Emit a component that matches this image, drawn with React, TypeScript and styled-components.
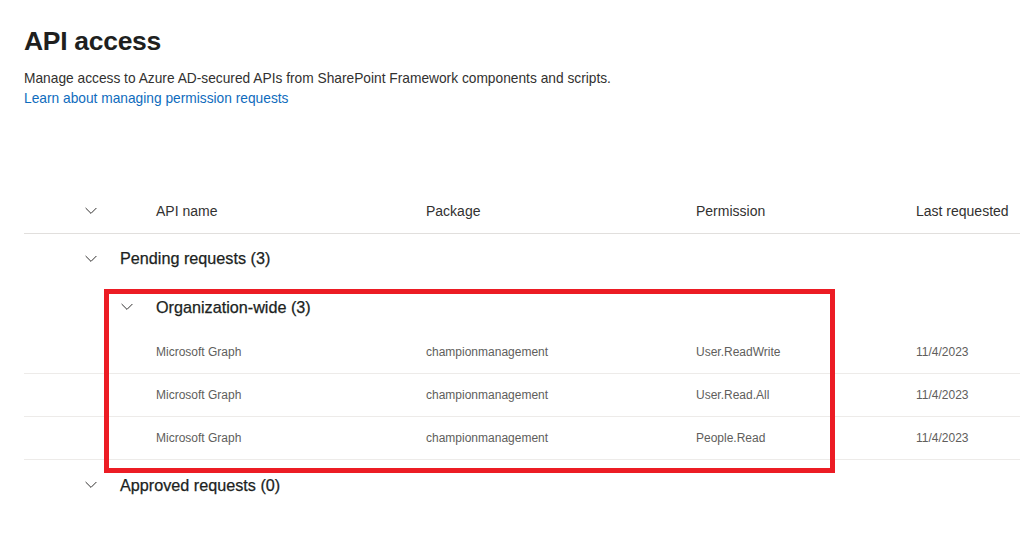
import React from "react";
import styled, { createGlobalStyle } from "styled-components";

const GlobalStyle = createGlobalStyle`
  html, body {
    margin: 0;
    padding: 0;
    background: #ffffff;
    overflow: hidden;
  }
  body {
    font-family: "Liberation Sans", Arial, sans-serif;
    color: #323130;
  }
`;

type Request = {
  api: string;
  pkg: string;
  permission: string;
  date: string;
};

const requests: Request[] = [
  { api: "Microsoft Graph", pkg: "championmanagement", permission: "User.ReadWrite", date: "11/4/2023" },
  { api: "Microsoft Graph", pkg: "championmanagement", permission: "User.Read.All", date: "11/4/2023" },
  { api: "Microsoft Graph", pkg: "championmanagement", permission: "People.Read", date: "11/4/2023" },
];

function Chevron() {
  return (
    <svg width="12" height="8" viewBox="0 0 12 8" fill="none">
      <path d="M0.6 1L6 6.4L11.4 1" stroke="#323130" strokeWidth="1" />
    </svg>
  );
}

export default function App() {
  return (
    <Page>
      <GlobalStyle />
      <Title>API access</Title>
      <Description>
        Manage access to Azure AD-secured APIs from SharePoint Framework components and scripts.
      </Description>
      <Link href="#">Learn about managing permission requests</Link>

      <Table>
        <HeaderRow>
          <ChevronCell indent={61}>
            <Chevron />
          </ChevronCell>
          <HeaderCell>API name</HeaderCell>
          <HeaderCell>Package</HeaderCell>
          <HeaderCell>Permission</HeaderCell>
          <HeaderCell>Last requested</HeaderCell>
        </HeaderRow>

        <GroupRow height={49}>
          <GroupToggle indent={61}>
            <Chevron />
          </GroupToggle>
          <GroupTitle>Pending requests (3)</GroupTitle>
        </GroupRow>

        <GroupRow height={48}>
          <GroupToggle indent={97}>
            <Chevron />
          </GroupToggle>
          <GroupTitle>Organization-wide (3)</GroupTitle>
        </GroupRow>

        {requests.map((r, i) => (
          <DataRow key={i}>
            <span />
            <DataCell>{r.api}</DataCell>
            <DataCell>{r.pkg}</DataCell>
            <DataCell>{r.permission}</DataCell>
            <DataCell>{r.date}</DataCell>
          </DataRow>
        ))}

        <GroupRow height={50}>
          <GroupToggle indent={61}>
            <Chevron />
          </GroupToggle>
          <GroupTitle>Approved requests (0)</GroupTitle>
        </GroupRow>
      </Table>

      <Highlight />
    </Page>
  );
}

const Page = styled.div`
  position: relative;
  width: 1020px;
  height: 541px;
  padding: 24px 0 0 24px;
  box-sizing: border-box;
`;

const Title = styled.h1`
  margin: 0;
  font-size: 26.5px;
  line-height: 34px;
  font-weight: 700;
  color: #201f1e;
  letter-spacing: -0.3px;
`;

const Description = styled.p`
  margin: 11px 0 0;
  font-size: 13.75px;
  line-height: 20px;
  color: #323130;
`;

const Link = styled.a`
  display: block;
  font-size: 13.75px;
  line-height: 20px;
  color: #0f6cbd;
  text-decoration: none;
`;

const Table = styled.div`
  margin-top: 80px;
  width: 996px;
  display: flex;
  flex-direction: column;
`;

const columns = "132px 270px 270px 220px 1fr";

const HeaderRow = styled.div`
  display: grid;
  grid-template-columns: ${columns};
  align-items: center;
  height: 44px;
  border-bottom: 1px solid #e1dfdd;
`;

const ChevronCell = styled.div<{ indent: number }>`
  display: flex;
  align-items: center;
  padding-left: ${(p) => p.indent}px;
`;

const HeaderCell = styled.div`
  font-size: 14px;
  color: #323130;
  white-space: nowrap;
`;

const GroupRow = styled.div<{ height: number }>`
  display: flex;
  align-items: center;
  height: ${(p) => p.height}px;
`;

const GroupToggle = styled.div<{ indent: number }>`
  display: flex;
  align-items: center;
  padding-left: ${(p) => p.indent}px;
  width: 12px;
  margin-right: 23px;
`;

const GroupTitle = styled.div`
  font-size: 16.2px;
  font-weight: 400;
  color: #201f1e;
  white-space: nowrap;
  -webkit-text-stroke: 0.25px #201f1e;
`;

const DataRow = styled.div`
  display: grid;
  grid-template-columns: ${columns};
  align-items: center;
  height: 42px;
  border-bottom: 1px solid #edebe9;
`;

const DataCell = styled.div`
  font-size: 12px;
  color: #605e5c;
  white-space: nowrap;
`;

const Highlight = styled.div`
  position: absolute;
  left: 104px;
  top: 289px;
  width: 731px;
  height: 184px;
  border: 5px solid #ec1c24;
  box-sizing: border-box;
  pointer-events: none;
`;
